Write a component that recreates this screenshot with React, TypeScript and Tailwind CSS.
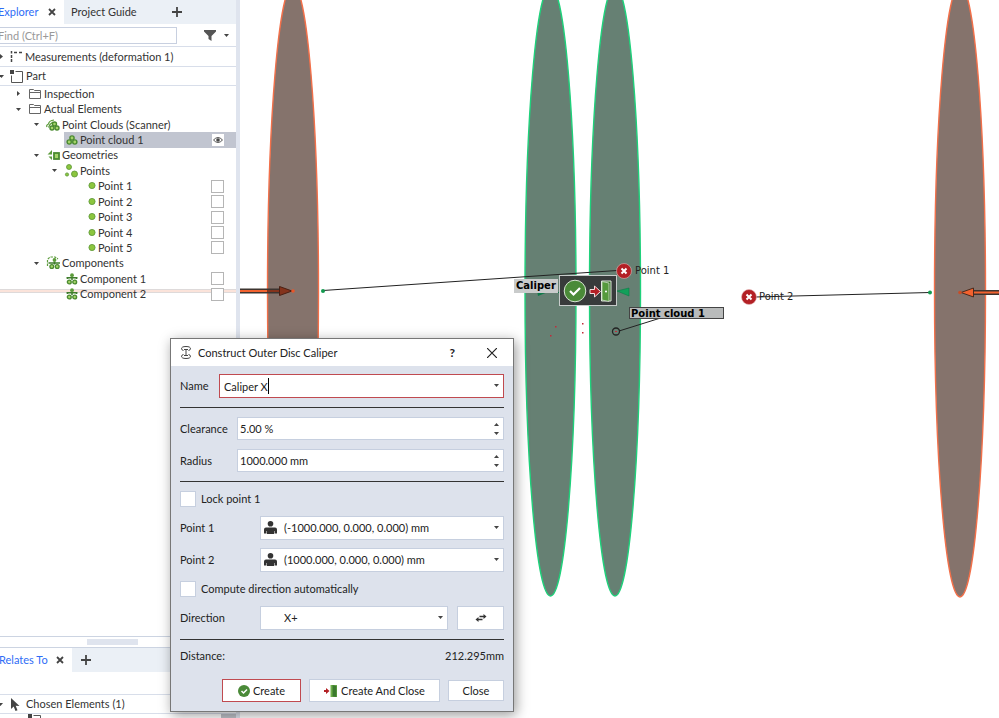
type IconName = "folder" | "clouds" | "cloud" | "geometry" | "points" | "dot" | "components" | "component";

const ring = "fill-[#a5d46a] stroke-[#4a8a30]";
const ball = "fill-[#8cc63f] stroke-[#5a9636]";

function TreeIcon({ name }: { name: IconName }) {
  switch (name) {
    case "folder":
      return (
        <svg className="h-3 w-[14px] shrink-0" viewBox="0 0 14 12" fill="none" stroke="#666" aria-hidden="true">
          <path d="M1.500 10.500v-9h4l1 1h6v8zM1.500 4.500h11" />
        </svg>
      );
    case "clouds":
      return (
        <svg className="h-3 w-[14px] shrink-0" viewBox="0 0 14 12" aria-hidden="true">
          <path d="M1 8Q0 6 2.500 5 3 1.500 8 1M2.500 8.500 4 5.500l3-2.500" className="fill-none stroke-[#5b9b3a]" strokeWidth="1.200" />
          <g className={ring} strokeWidth="1.400">
            <circle cx="8.500" cy="5" r="2" />
            <circle cx="6" cy="9" r="2" />
            <circle cx="11" cy="9" r="2" />
          </g>
        </svg>
      );
    case "cloud":
      return (
        <svg className="h-3 w-3 shrink-0" viewBox="0 0 12 12" aria-hidden="true">
          <g className={ring} strokeWidth="1.400">
            <circle cx="6" cy="4" r="2.100" />
            <circle cx="3.200" cy="8" r="2.100" />
            <circle cx="8.800" cy="8" r="2.100" />
          </g>
        </svg>
      );
    case "geometry":
      return (
        <svg className="h-3 w-[14px] shrink-0" viewBox="0 0 14 12" aria-hidden="true">
          <path d="M1.500 5.500 6 1v4.500zM2.500 7.500H6V11z" className="fill-[#5b9b3a]" />
          <rect x="8" y="4" width="5" height="6" className="fill-[#a5d46a] stroke-[#4a8a30]" strokeWidth="1.800" />
        </svg>
      );
    case "points":
      return (
        <svg className="h-[14px] w-[14px] shrink-0" viewBox="0 0 14 14" aria-hidden="true">
          <g className={ball} strokeWidth=".8">
            <circle cx="5" cy="3" r="2.500" />
            <circle cx="3" cy="10.500" r="1.600" />
            <circle cx="10.500" cy="10" r="3" />
          </g>
        </svg>
      );
    case "dot":
      return (
        <svg className="h-2 w-2 shrink-0" viewBox="0 0 8 8" aria-hidden="true">
          <circle cx="4" cy="3.500" r="3.100" className={ball} strokeWidth=".8" />
        </svg>
      );
    case "components":
      return (
        <svg className="h-[14px] w-[14px] shrink-0" viewBox="0 0 14 14" aria-hidden="true">
          <path d="M1.500 10V3.500L4 1h5l3 2" className="fill-none stroke-[#5b9b3a]" strokeWidth="1.200" strokeDasharray="2.500 1" />
          <circle cx="8.500" cy="4" r="1.900" className="fill-[#5b9b3a]" />
          <path d="M2.500 7H14M8.500 6v2.500" className="stroke-[#3f7d2c]" strokeWidth="1.600" />
          <circle cx="5.800" cy="10.500" r="1.900" className={ring} strokeWidth="1.300" />
          <circle cx="11.200" cy="10.500" r="1.900" className={ring} strokeWidth="1.300" />
        </svg>
      );
    case "component":
      return (
        <svg className="h-3 w-3 shrink-0" viewBox="0 0 12 12" aria-hidden="true">
          <circle cx="6" cy="2.200" r="1.900" className="fill-[#5b9b3a]" />
          <path d="M.5 4.800h11M1.500 4v2M10.500 4v2M6 4v3" className="stroke-[#3f7d2c]" strokeWidth="1.500" />
          <circle cx="3.300" cy="9" r="1.900" className={ring} strokeWidth="1.400" />
          <circle cx="8.700" cy="9" r="1.900" className={ring} strokeWidth="1.400" />
        </svg>
      );
  }
}

function Caret({ className = "" }: { className?: string }) {
  return (
    <svg className={`h-[3px] w-[5px] shrink-0 ${className}`} viewBox="0 0 5 3" fill="#444" aria-hidden="true">
      <path d="M0 0h5L2.500 3z" />
    </svg>
  );
}

type Row = { label: string; icon: IconName; indent: string; open?: boolean; closed?: boolean; check?: boolean; selected?: boolean };

const rows: Row[] = [
  { label: "Inspection", icon: "folder", indent: "pl-[16px]", closed: true },
  { label: "Actual Elements", icon: "folder", indent: "pl-[16px]", open: true },
  { label: "Point Clouds (Scanner)", icon: "clouds", indent: "pl-[34px]", open: true },
  { label: "Point cloud 1", icon: "cloud", indent: "ml-[64px] pl-[2px]", selected: true },
  { label: "Geometries", icon: "geometry", indent: "pl-[34px]", open: true },
  { label: "Points", icon: "points", indent: "pl-[52px]", open: true },
  { label: "Point 1", icon: "dot", indent: "pl-[88px]", check: true },
  { label: "Point 2", icon: "dot", indent: "pl-[88px]", check: true },
  { label: "Point 3", icon: "dot", indent: "pl-[88px]", check: true },
  { label: "Point 4", icon: "dot", indent: "pl-[88px]", check: true },
  { label: "Point 5", icon: "dot", indent: "pl-[88px]", check: true },
  { label: "Components", icon: "components", indent: "pl-[34px]", open: true },
  { label: "Component 1", icon: "component", indent: "pl-[66px]", check: true },
  { label: "Component 2", icon: "component", indent: "pl-[66px]", check: true },
];

function TreeRow({ row }: { row: Row }) {
  return (
    <li className={`flex min-h-0 items-center pr-3 ${row.indent} ${row.selected ? "bg-[#c1c5d0]" : ""}`}>
      {(row.open || row.closed) && (
        <span className="flex w-3 shrink-0">
          <Caret className={row.closed ? "-rotate-90" : ""} />
        </span>
      )}
      <TreeIcon name={row.icon} />
      <span className="ml-[2px] flex-1 whitespace-nowrap">{row.label}</span>
      {row.check && (
        <input type="checkbox" aria-label={row.label} className="h-[13px] w-[13px] shrink-0 appearance-none border border-[#b5b5b5] bg-white" />
      )}
      {row.selected && (
        <button aria-label="Toggle visibility" className="flex h-3 w-3 items-center justify-center bg-white">
          <svg className="h-[10px] w-[10px]" viewBox="0 0 10 10" aria-hidden="true">
            <path d="M.5 5Q5 0 9.500 5 5 10 .5 5z" fill="none" stroke="#555" />
            <circle cx="5" cy="5" r="1.800" fill="#444" />
          </svg>
        </button>
      )}
    </li>
  );
}

function Cross() {
  return (
    <svg className="h-2 w-2" viewBox="0 0 8 8" stroke="#444" strokeWidth="1.800" aria-hidden="true">
      <path d="m1 1 6 6M7 1 1 7" />
    </svg>
  );
}

function Plus() {
  return (
    <svg className="h-[10px] w-[10px]" viewBox="0 0 10 10" stroke="#444" strokeWidth="1.800" aria-hidden="true">
      <path d="M5 0v10M0 5h10" />
    </svg>
  );
}

function PartIcon() {
  return (
    <svg className="h-[13px] w-[13px] shrink-0" viewBox="0 0 13 13" aria-hidden="true">
      <path d="M5.500 1.500h7v11h-11v-7" fill="none" stroke="#555" />
      <path d="M0 0h4v4H0z" fill="#444" />
    </svg>
  );
}

function Sidebar() {
  return (
    <aside className="relative flex w-[240px] shrink-0 flex-col border-r-4 border-[#dfe4ee] bg-white">
      <div className="flex h-6 shrink-0 bg-[#ebf0f6]">
        <div className="flex w-16 items-center justify-between bg-white pr-2">
          <button className="-ml-[2px] text-[#2f6df6]">Explorer</button>
          <button aria-label="Close Explorer"><Cross /></button>
        </div>
        <button className="ml-[7px] w-[65px] text-left whitespace-nowrap">Project Guide</button>
        <button aria-label="Add tab" className="ml-9"><Plus /></button>
      </div>
      <div className="flex h-[23px] shrink-0 items-center border-b border-[#d8deea]">
        <input aria-label="Find" placeholder="Find (Ctrl+F)" className="-ml-1 h-[17px] w-[181px] border border-[#c8d0e0] px-px outline-none placeholder:text-[#999]" />
        <button aria-label="Filter" className="ml-[27px]">
          <svg className="h-[11px] w-3" viewBox="0 0 12 11" fill="#555" aria-hidden="true"><path d="M0 0h12v1.500L7.500 6v5l-3-2V6L0 1.500z" /></svg>
        </button>
        <Caret className="ml-2" />
      </div>
      <div className="flex h-5 shrink-0 items-center border-b border-[#d8deea]">
        <svg className="mr-[7px] h-[5px] w-[3px]" viewBox="0 0 3 5" fill="#444" aria-hidden="true"><path d="M0 0v5l3-2.500z" /></svg>
        <svg className="h-3 w-3" viewBox="0 0 12 12" fill="none" stroke="#444" strokeWidth="1.500" aria-hidden="true">
          <path d="M1.500 0v2.500M4 1.500h3M9 1.500h3" />
          <path d="M1.500 4v8" strokeDasharray="3 1" />
        </svg>
        <span className="ml-[3px]">Measurements (deformation 1)</span>
      </div>
      <div className="flex h-[19px] shrink-0 items-center border-b border-[#d8deea]">
        <Caret className="mr-[6px] -ml-[1px]" />
        <PartIcon />
        <span className="ml-[3px]">Part</span>
      </div>
      <div className="pointer-events-none absolute inset-x-0 top-[289px] h-[4px] border-y border-[#dedada] bg-[#fbe3da]" />
      <ul className="relative grid h-[216px] shrink-0 auto-rows-fr">
        {rows.map((row) => <TreeRow key={row.label} row={row} />)}
      </ul>
      <div className="flex-1" />
      <div className="flex h-3 shrink-0 items-center border-y border-[#ccd4e2]">
        <div className="ml-[87px] h-[6px] w-[51px] bg-[#dfe4ee]" />
      </div>
      <div className="flex h-6 shrink-0 bg-[#ebf0f6]">
        <div className="flex w-[72px] items-center justify-between bg-white pr-2">
          <button className="-ml-[1px] whitespace-nowrap text-[#2f6df6]">Relates To</button>
          <button aria-label="Close Relates To"><Cross /></button>
        </div>
        <button aria-label="Add tab" className="ml-[9px]"><Plus /></button>
      </div>
      <div className="mt-[22px] flex h-5 shrink-0 items-center border-y border-[#d8deea]">
        <Caret className="mr-[7px] -ml-[2px]" />
        <svg className="h-[13px] w-[10px]" viewBox="0 0 10 13" fill="#444" aria-hidden="true"><path d="M1 0v11l2.700-2.500L5.500 13l2-.8-1.800-4.400L9.500 8z" /></svg>
        <span className="ml-[6px]">Chosen Elements (1)</span>
      </div>
      <div className="flex h-1 shrink-0 items-start overflow-hidden pl-7">
        <PartIcon />
        <span className="ml-[3px]">Part</span>
        <div className="ml-auto h-2 w-[15px] bg-[#bfc2c9]" />
      </div>
    </aside>
  );
}

function RedMarker({ className }: { className: string }) {
  return (
    <svg className={`absolute h-4 w-4 ${className}`} viewBox="0 0 16 16" aria-hidden="true">
      <circle cx="8" cy="8" r="7.500" fill="#b32025" stroke="#e3b5b5" strokeWidth=".6" />
      <path d="m5.500 5.500 5 5M10.500 5.500l-5 5" stroke="#fff" strokeWidth="2" />
    </svg>
  );
}

function Scene() {
  return (
    <main className="relative min-w-0 flex-1 overflow-hidden bg-white font-['DejaVu_Sans',sans-serif] text-[10px] leading-3 text-[#222]">
      <svg className="absolute top-0 left-0 h-[718px] w-[759px]" viewBox="240 0 759 718" aria-hidden="true">
        <g strokeWidth="1.400">
          <g fill="#85736c" stroke="#f2704a">
            <ellipse cx="293" cy="291" rx="25.500" ry="306" />
            <ellipse cx="960" cy="291" rx="25.500" ry="306" />
          </g>
          <g fill="#668073" stroke="#1fd17b">
            <ellipse cx="550.500" cy="291" rx="25.500" ry="305" />
            <ellipse cx="615" cy="291" rx="25.500" ry="305" />
          </g>
        </g>
        <g stroke="#222" fill="none">
          <path d="M323 290.500 617 270.500M755 297l175-4.500" />
          <path d="m619 331 40-12.500" />
          <circle cx="616" cy="331.500" r="3.500" strokeWidth="1.300" />
        </g>
        <path d="M240 291h40M999 292.500h-27" stroke="#3c3430" strokeWidth="5" />
        <path d="M240 291h27M999 292.500h-27" stroke="#f2622f" strokeWidth="2" />
        <path d="M267 291h14" stroke="#84331c" strokeWidth="2" />
        <path d="M279.500 286.500 292 291l-12.500 4.500z" fill="#84331c" stroke="#4a2014" />
        <path d="M973.500 288 961 292.500l12.500 4.500z" fill="#f2622f" stroke="#4a2a1c" />
        <circle cx="293" cy="291" r="1.800" fill="#e8562a" />
        <circle cx="960" cy="292.500" r="1.800" fill="#c94d26" />
        <circle cx="323" cy="291" r="2" fill="#149a50" />
        <circle cx="930" cy="292.500" r="2" fill="#149a50" />
        <path d="m537 290 11 2-10 4z" fill="#0f7a4a" />
        <path d="M548 292.500h12" stroke="#0f7a4a" />
        <path d="m617 291 12-3v8z" fill="#12a05a" stroke="#0d7a46" strokeWidth=".6" />
        <path d="M555 326h1.500v1.500h-1.500zM550 335h1.500v1.500h-1.500zM582 323h1.500v1.500h-1.500zM582 332h1.500v1.500h-1.500zM615 331h2v1h-2z" fill="#c22a3a" />
      </svg>
      <span className="absolute top-[279px] left-[274px] bg-[#c9cbcb] px-[2px] leading-[14px] font-bold text-black">Caliper</span>
      <div className="absolute top-[275px] left-[319px] flex h-[31px] w-[58px] items-center justify-between border border-[#c8cccb] bg-[#383b3b] px-[3px]">
        <button aria-label="Create">
          <svg className="h-6 w-6" viewBox="0 0 24 24" aria-hidden="true">
            <circle cx="12" cy="12" r="10.800" fill="#4a8a38" stroke="#d9e4d5" />
            <path d="m7 12 3.500 3.500L17 9" fill="none" stroke="#fff" strokeWidth="2.200" />
          </svg>
        </button>
        <button aria-label="Create and close">
          <svg className="h-6 w-6" viewBox="0 0 24 24" aria-hidden="true">
            <path d="M1 10.500h4.500V7l6 5.500-6 5.500v-3.500H1z" fill="#b32025" stroke="#f2dddd" />
            <path d="M12.500 2h9.500v20h-9.500z" fill="#367028" stroke="#dfe8dc" />
            <path d="m13 2.500 7 1.500v18.500L13 21z" fill="#559a3c" stroke="#dfe8dc" strokeWidth=".7" />
            <circle cx="17" cy="12.500" r="1" fill="#fff" />
          </svg>
        </button>
      </div>
      <RedMarker className="top-[263px] left-[376px]" />
      <span className="absolute top-[265px] left-[395px]">Point 1</span>
      <RedMarker className="top-[289px] left-[501px]" />
      <span className="absolute top-[291px] left-[519px]">Point 2</span>
      <span className="absolute top-[307px] left-[389px] h-3 w-[95px] border border-[#444] bg-[#b9bbbb] px-px leading-[11px] font-bold text-black">Point cloud 1</span>
    </main>
  );
}

function PersonIcon() {
  return (
    <svg className="h-[13px] w-[13px]" viewBox="0 0 13 13" fill="#333" aria-hidden="true">
      <circle cx="6.500" cy="2.800" r="2.800" />
      <path d="M0 12.500V8.500Q0 6.500 2 6.500h9q2 0 2 2v4h-2.500V10H10v3H3v-3h-.5v2.500z" />
    </svg>
  );
}

const field = "block w-full appearance-none border bg-white text-[#222] outline-none";

function Select({ id, value, icon, className = "" }: { id: string; value: string; icon?: boolean; className?: string }) {
  return (
    <div className={`relative ${className}`}>
      <select id={id} className={`${field} h-6 border-[#c6cfdf] pl-[23px]`}>
        <option>{value}</option>
      </select>
      {icon && <span className="pointer-events-none absolute top-[5px] left-1"><PersonIcon /></span>}
      <span className="pointer-events-none absolute top-[10px] right-[5px] flex"><Caret /></span>
    </div>
  );
}

function Spin({ id, label, value }: { id: string; label: string; value: string }) {
  return (
    <div className="flex items-center">
      <label htmlFor={id} className="w-[57px] shrink-0">{label}</label>
      <div className="relative flex-1">
        <input id={id} defaultValue={value} className={`${field} h-[23px] border-[#c6cfdf] px-[2px]`} />
        <span className="pointer-events-none absolute inset-y-0 right-[5px] flex flex-col justify-center gap-[6px]">
          <Caret className="rotate-180" />
          <Caret />
        </span>
      </div>
    </div>
  );
}

function Check({ label }: { label: string }) {
  return (
    <label className="flex h-4 items-center gap-[5px]">
      <input type="checkbox" className="h-4 w-4 appearance-none border border-[#c6cfdf] bg-white" />
      {label}
    </label>
  );
}

function Line() {
  return <hr className="my-[9px] border-t border-[#333]" />;
}

function CaliperDialog() {
  return (
    <section role="dialog" aria-label="Construct Outer Disc Caliper" className="absolute top-[338px] left-[170px] w-[344px] border border-[#777] bg-[#dde2ec] text-[#222] shadow-[2px_3px_12px_rgba(0,0,0,0.4)]">
      <header className="flex h-[27px] items-center bg-white pr-4 pl-[10px]">
        <svg className="h-[13px] w-[10px]" viewBox="0 0 10 13" fill="none" stroke="#444" aria-hidden="true">
          <path d="M2.500 4.500Q.5 4 .5 2.800.5.500 5 .5t4.500 2.300q0 1.200-2 1.700M2.500 8.500Q.5 9 .5 10.200q0 2.300 4.500 2.300t4.500-2.300q0-1.200-2-1.700M5 3.500v6M3 3.500h4M3 9.500h4" />
        </svg>
        <h1 className="ml-[7px] flex-1">Construct Outer Disc Caliper</h1>
        <button aria-label="Help" className="mr-8 text-xs font-bold">?</button>
        <button aria-label="Close dialog">
          <svg className="h-[10px] w-[10px]" viewBox="0 0 10 10" stroke="#222" strokeWidth="1.200" aria-hidden="true"><path d="m0 0 10 10M10 0 0 10" /></svg>
        </button>
      </header>
      <div className="px-[9px] pt-2 pb-[9px]">
        <div className="flex items-center">
          <label htmlFor="name" className="w-[39px] shrink-0">Name</label>
          <div className="relative flex-1">
            <input id="name" defaultValue="Caliper X" className={`${field} h-6 border-[#c04a50] px-1`} />
            <span className="pointer-events-none absolute top-1 left-[49px] h-4 w-px bg-black" />
            <span className="pointer-events-none absolute top-[10px] right-[5px] flex"><Caret /></span>
          </div>
        </div>
        <Line />
        <div className="flex flex-col gap-[9px]">
          <Spin id="clearance" label="Clearance" value="5.00 %" />
          <Spin id="radius" label="Radius" value="1000.000 mm" />
        </div>
        <Line />
        <Check label="Lock point 1" />
        <div className="my-[9px] flex flex-col gap-2">
          <div className="flex items-center">
            <label htmlFor="p1" className="w-20 shrink-0">Point 1</label>
            <Select id="p1" value="(-1000.000, 0.000, 0.000) mm" icon className="flex-1" />
          </div>
          <div className="flex items-center">
            <label htmlFor="p2" className="w-20 shrink-0">Point 2</label>
            <Select id="p2" value="(1000.000, 0.000, 0.000) mm" icon className="flex-1" />
          </div>
        </div>
        <Check label="Compute direction automatically" />
        <div className="mt-[9px] flex items-center">
          <label htmlFor="dir" className="w-20 shrink-0">Direction</label>
          <Select id="dir" value="X+" className="flex-1" />
          <button aria-label="Swap direction" className="ml-[9px] flex h-6 w-[47px] items-center justify-center border border-[#c6cfdf] bg-white">
            <svg className="h-2 w-3" viewBox="0 0 12 8" fill="#333" aria-hidden="true">
              <path d="M4.500 1.800H8.500V0L11.500 2.500 8.500 5V3.200H4.500zM7.500 6.200H3.500V8L.5 5.500 3.500 3V4.800H7.500z" />
            </svg>
          </button>
        </div>
        <Line />
        <div className="flex h-[14px] items-center justify-between">
          <span>Distance:</span>
          <output>212.295mm</output>
        </div>
        <div className="mt-4 flex items-center justify-end">
          <button className="mr-2 flex h-[23px] w-[79px] items-center justify-center gap-[3px] border border-[#c04a50] bg-white">
            <svg className="h-3 w-3" viewBox="0 0 12 12" aria-hidden="true">
              <circle cx="6" cy="6" r="6" fill="#4a8a38" />
              <path d="m3.500 6 2 2 3.500-3.500" fill="none" stroke="#fff" strokeWidth="1.500" />
            </svg>
            Create
          </button>
          <button className="mr-2 flex h-[23px] w-[131px] items-center justify-center gap-[3px] border border-[#c6cfdf] bg-white">
            <svg className="h-3 w-[14px]" viewBox="0 0 14 12" aria-hidden="true">
              <path d="M0 5h2V3l3.500 3L2 9V7H0z" fill="#b32025" />
              <path d="M6.500 0H13v12H6.500z" fill="#6fae4a" />
              <path d="m8.500 0 4 1v11l-4-.5z" fill="#3b7a2e" />
            </svg>
            Create And Close
          </button>
          <button className="h-[21px] w-14 border border-[#c6cfdf] bg-white">Close</button>
        </div>
      </div>
    </section>
  );
}

export default function App() {
  return (
    <div className="relative flex h-screen overflow-hidden bg-white font-['Lato','Open_Sans',sans-serif] text-[11px] leading-4 text-[#333]">
      <Sidebar />
      <Scene />
      <CaliperDialog />
    </div>
  );
}
